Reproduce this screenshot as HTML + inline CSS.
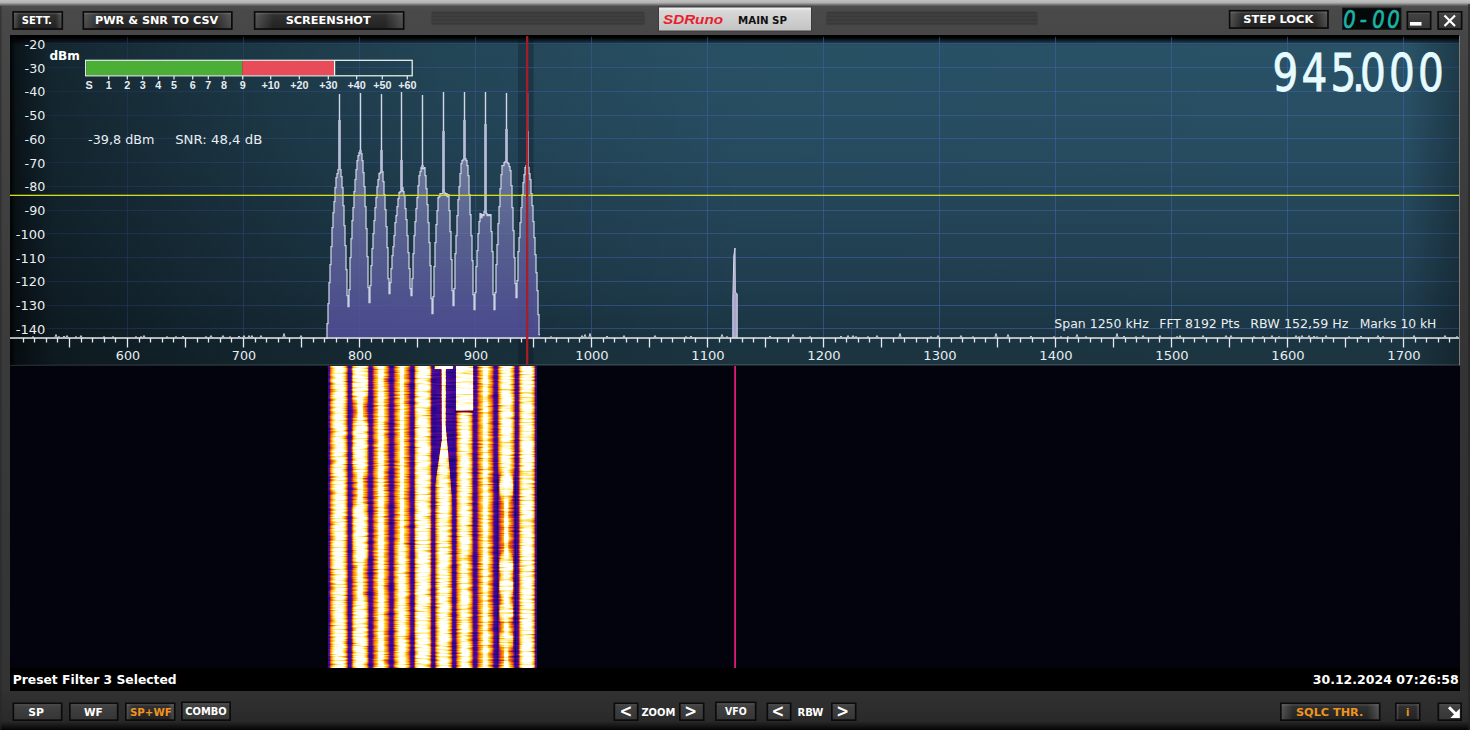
<!DOCTYPE html>
<html lang="en"><head><meta charset="utf-8"><title>SDRuno MAIN SP</title>
<style>
html,body{margin:0;padding:0;background:#484848;overflow:hidden}
body{width:1470px;height:730px}
svg{display:block}
text{font-family:"DejaVu Sans Condensed","DejaVu Sans","Liberation Sans",sans-serif;white-space:pre}
.b{font-weight:bold;fill:#fff;font-size:10.8px}
.o{fill:#f0941e}
.w{font-family:"DejaVu Sans","Liberation Sans",sans-serif;fill:#e8eef2;font-size:12px}
.ar{font-family:"Liberation Sans","DejaVu Sans",sans-serif;font-weight:bold;fill:#e6ecf0;font-size:10.8px}
</style></head><body>
<svg width="1470" height="730" viewBox="0 0 1470 730">
<defs>
<linearGradient id="gTop" x1="0" y1="0" x2="0" y2="1">
<stop offset="0" stop-color="#c2c2c2"/><stop offset="0.075" stop-color="#b2b2b2"/><stop offset="0.17" stop-color="#4e4e4e"/><stop offset="0.3" stop-color="#494949"/><stop offset="1" stop-color="#474747"/>
</linearGradient>
<linearGradient id="gBot" x1="0" y1="0" x2="0" y2="1">
<stop offset="0" stop-color="#313131"/><stop offset="0.5" stop-color="#2d2d2d"/><stop offset="0.78" stop-color="#292929"/><stop offset="0.9" stop-color="#151515"/><stop offset="1" stop-color="#040404"/>
</linearGradient>
<linearGradient id="gSideL" x1="0" y1="0" x2="0" y2="1"><stop offset="0" stop-color="#474747"/><stop offset="0.25" stop-color="#404040"/><stop offset="0.5" stop-color="#3a3a3a"/><stop offset="1" stop-color="#333"/></linearGradient>
<linearGradient id="gSideR" x1="0" y1="0" x2="0" y2="1"><stop offset="0" stop-color="#464646"/><stop offset="0.25" stop-color="#3c3c3c"/><stop offset="0.5" stop-color="#343434"/><stop offset="1" stop-color="#2e2e2e"/></linearGradient>
<linearGradient id="gBtn" x1="0" y1="0" x2="0" y2="1">
<stop offset="0" stop-color="#505050"/><stop offset="0.14" stop-color="#2c2c2c"/><stop offset="1" stop-color="#1e1e1e"/>
</linearGradient>
<linearGradient id="gGloss" x1="0" y1="0" x2="1" y2="0"><stop offset="0" stop-color="#fff" stop-opacity="0.2"/><stop offset="0.12" stop-color="#fff" stop-opacity="0.02"/><stop offset="0.88" stop-color="#fff" stop-opacity="0.02"/><stop offset="1" stop-color="#fff" stop-opacity="0.2"/></linearGradient>
<linearGradient id="gBtn2" x1="0" y1="0" x2="0" y2="1">
<stop offset="0" stop-color="#5a5a5a"/><stop offset="0.12" stop-color="#414141"/><stop offset="1" stop-color="#363636"/>
</linearGradient>
<linearGradient id="gBadge" x1="0" y1="0" x2="0" y2="1">
<stop offset="0" stop-color="#f4f4f4"/><stop offset="0.15" stop-color="#d8d8d8"/><stop offset="1" stop-color="#c4c4c4"/>
</linearGradient>
<linearGradient id="gSpV" x1="0" y1="0" x2="0" y2="1">
<stop offset="0" stop-color="#000"/><stop offset="0.008" stop-color="#000"/><stop offset="0.03" stop-color="#295266"/><stop offset="0.35" stop-color="#274c60"/><stop offset="0.75" stop-color="#203e4f"/><stop offset="0.92" stop-color="#1b3543"/><stop offset="1" stop-color="#1c3540"/>
</linearGradient>
<linearGradient id="gSpH" x1="0" y1="0" x2="1" y2="0">
<stop offset="0" stop-color="#000" stop-opacity="0.95"/><stop offset="0.004" stop-color="#000" stop-opacity="0.75"/><stop offset="0.03" stop-color="#000" stop-opacity="0.52"/><stop offset="0.12" stop-color="#000" stop-opacity="0.38"/><stop offset="0.3" stop-color="#000" stop-opacity="0.15"/><stop offset="0.5" stop-color="#000" stop-opacity="0.02"/><stop offset="0.965" stop-color="#000" stop-opacity="0"/><stop offset="1" stop-color="#000" stop-opacity="0.28"/>
</linearGradient>
<linearGradient id="gFill" x1="0" y1="0" x2="0" y2="1">
<stop offset="0" stop-color="#8a90b6" stop-opacity="0.72"/><stop offset="0.45" stop-color="#686ca4" stop-opacity="0.76"/><stop offset="1" stop-color="#524e9c" stop-opacity="0.84"/>
</linearGradient>

<linearGradient id="gWf" gradientUnits="userSpaceOnUse" x1="327.5" y1="0" x2="537.5" y2="0">
<stop offset="0.0000" stop-color="#000000"/>
<stop offset="0.0038" stop-color="#333333"/>
<stop offset="0.0095" stop-color="#404040"/>
<stop offset="0.0152" stop-color="#7a7a7a"/>
<stop offset="0.0219" stop-color="#a3a3a3"/>
<stop offset="0.0332" stop-color="#cccccc"/>
<stop offset="0.0409" stop-color="#f5f5f5"/>
<stop offset="0.0485" stop-color="#ffffff"/>
<stop offset="0.0637" stop-color="#ffffff"/>
<stop offset="0.0713" stop-color="#f5f5f5"/>
<stop offset="0.0790" stop-color="#cccccc"/>
<stop offset="0.0868" stop-color="#a8a8a8"/>
<stop offset="0.0930" stop-color="#787878"/>
<stop offset="0.0996" stop-color="#383838"/>
<stop offset="0.1120" stop-color="#383838"/>
<stop offset="0.1187" stop-color="#787878"/>
<stop offset="0.1249" stop-color="#a8a8a8"/>
<stop offset="0.1327" stop-color="#cccccc"/>
<stop offset="0.1403" stop-color="#f5f5f5"/>
<stop offset="0.1479" stop-color="#ffffff"/>
<stop offset="0.1631" stop-color="#ffffff"/>
<stop offset="0.1708" stop-color="#f5f5f5"/>
<stop offset="0.1784" stop-color="#cccccc"/>
<stop offset="0.1862" stop-color="#a8a8a8"/>
<stop offset="0.1924" stop-color="#787878"/>
<stop offset="0.1990" stop-color="#383838"/>
<stop offset="0.2114" stop-color="#383838"/>
<stop offset="0.2181" stop-color="#787878"/>
<stop offset="0.2243" stop-color="#a8a8a8"/>
<stop offset="0.2321" stop-color="#cccccc"/>
<stop offset="0.2397" stop-color="#f5f5f5"/>
<stop offset="0.2473" stop-color="#ffffff"/>
<stop offset="0.2626" stop-color="#ffffff"/>
<stop offset="0.2702" stop-color="#f5f5f5"/>
<stop offset="0.2778" stop-color="#cccccc"/>
<stop offset="0.2856" stop-color="#a8a8a8"/>
<stop offset="0.2918" stop-color="#787878"/>
<stop offset="0.2985" stop-color="#383838"/>
<stop offset="0.3109" stop-color="#383838"/>
<stop offset="0.3175" stop-color="#787878"/>
<stop offset="0.3237" stop-color="#a8a8a8"/>
<stop offset="0.3315" stop-color="#cccccc"/>
<stop offset="0.3391" stop-color="#f5f5f5"/>
<stop offset="0.3468" stop-color="#ffffff"/>
<stop offset="0.3620" stop-color="#ffffff"/>
<stop offset="0.3696" stop-color="#f5f5f5"/>
<stop offset="0.3772" stop-color="#cccccc"/>
<stop offset="0.3850" stop-color="#a8a8a8"/>
<stop offset="0.3912" stop-color="#787878"/>
<stop offset="0.3979" stop-color="#383838"/>
<stop offset="0.4103" stop-color="#383838"/>
<stop offset="0.4170" stop-color="#787878"/>
<stop offset="0.4231" stop-color="#a8a8a8"/>
<stop offset="0.4310" stop-color="#cccccc"/>
<stop offset="0.4386" stop-color="#f5f5f5"/>
<stop offset="0.4462" stop-color="#ffffff"/>
<stop offset="0.4614" stop-color="#ffffff"/>
<stop offset="0.4690" stop-color="#f5f5f5"/>
<stop offset="0.4767" stop-color="#cccccc"/>
<stop offset="0.4845" stop-color="#a8a8a8"/>
<stop offset="0.4907" stop-color="#787878"/>
<stop offset="0.4973" stop-color="#383838"/>
<stop offset="0.5097" stop-color="#383838"/>
<stop offset="0.5164" stop-color="#787878"/>
<stop offset="0.5226" stop-color="#a8a8a8"/>
<stop offset="0.5304" stop-color="#cccccc"/>
<stop offset="0.5380" stop-color="#f5f5f5"/>
<stop offset="0.5456" stop-color="#ffffff"/>
<stop offset="0.5609" stop-color="#ffffff"/>
<stop offset="0.5685" stop-color="#f5f5f5"/>
<stop offset="0.5761" stop-color="#cccccc"/>
<stop offset="0.5839" stop-color="#a8a8a8"/>
<stop offset="0.5901" stop-color="#787878"/>
<stop offset="0.5968" stop-color="#383838"/>
<stop offset="0.6091" stop-color="#383838"/>
<stop offset="0.6158" stop-color="#787878"/>
<stop offset="0.6220" stop-color="#a8a8a8"/>
<stop offset="0.6298" stop-color="#cccccc"/>
<stop offset="0.6374" stop-color="#f5f5f5"/>
<stop offset="0.6450" stop-color="#ffffff"/>
<stop offset="0.6603" stop-color="#ffffff"/>
<stop offset="0.6679" stop-color="#f5f5f5"/>
<stop offset="0.6755" stop-color="#cccccc"/>
<stop offset="0.6833" stop-color="#a8a8a8"/>
<stop offset="0.6895" stop-color="#787878"/>
<stop offset="0.6962" stop-color="#383838"/>
<stop offset="0.7086" stop-color="#383838"/>
<stop offset="0.7152" stop-color="#787878"/>
<stop offset="0.7214" stop-color="#a8a8a8"/>
<stop offset="0.7292" stop-color="#cccccc"/>
<stop offset="0.7369" stop-color="#f5f5f5"/>
<stop offset="0.7445" stop-color="#ffffff"/>
<stop offset="0.7597" stop-color="#ffffff"/>
<stop offset="0.7673" stop-color="#f5f5f5"/>
<stop offset="0.7750" stop-color="#cccccc"/>
<stop offset="0.7828" stop-color="#a8a8a8"/>
<stop offset="0.7890" stop-color="#787878"/>
<stop offset="0.7956" stop-color="#383838"/>
<stop offset="0.8080" stop-color="#383838"/>
<stop offset="0.8147" stop-color="#787878"/>
<stop offset="0.8209" stop-color="#a8a8a8"/>
<stop offset="0.8287" stop-color="#cccccc"/>
<stop offset="0.8363" stop-color="#f5f5f5"/>
<stop offset="0.8439" stop-color="#ffffff"/>
<stop offset="0.8591" stop-color="#ffffff"/>
<stop offset="0.8668" stop-color="#f5f5f5"/>
<stop offset="0.8744" stop-color="#cccccc"/>
<stop offset="0.8822" stop-color="#a8a8a8"/>
<stop offset="0.8884" stop-color="#787878"/>
<stop offset="0.8950" stop-color="#383838"/>
<stop offset="0.9074" stop-color="#383838"/>
<stop offset="0.9141" stop-color="#787878"/>
<stop offset="0.9203" stop-color="#a8a8a8"/>
<stop offset="0.9281" stop-color="#cccccc"/>
<stop offset="0.9357" stop-color="#f5f5f5"/>
<stop offset="0.9433" stop-color="#ffffff"/>
<stop offset="0.9586" stop-color="#ffffff"/>
<stop offset="0.9662" stop-color="#f5f5f5"/>
<stop offset="0.9738" stop-color="#cccccc"/>
<stop offset="0.9781" stop-color="#a3a3a3"/>
<stop offset="0.9848" stop-color="#7a7a7a"/>
<stop offset="0.9905" stop-color="#404040"/>
<stop offset="0.9962" stop-color="#333333"/>
<stop offset="1.0000" stop-color="#000000"/>
</linearGradient>
<filter id="fBl" filterUnits="userSpaceOnUse" x="327.5" y="366" width="210.0" height="302"><feGaussianBlur stdDeviation="0.7 3"/></filter>
<filter id="fWf" filterUnits="userSpaceOnUse" x="327.5" y="366" width="210.0" height="302" color-interpolation-filters="sRGB">
<feTurbulence type="fractalNoise" baseFrequency="0.05 0.55" numOctaves="2" seed="5" result="n"/>
<feColorMatrix in="n" type="matrix" values="1 0 0 0 0  1 0 0 0 0  1 0 0 0 0  0 0 0 0 1" result="ng"/>
<feComposite in="SourceGraphic" in2="ng" operator="arithmetic" k1="1.0" k2="0.52" k3="0" k4="0" result="m"/>
<feComponentTransfer in="m"><feFuncR type="table" tableValues="0.00 0.05 0.18 0.42 0.82 0.93 1.00 1.00 1.00 1.00 1.00"/><feFuncG type="table" tableValues="0.00 0.00 0.03 0.06 0.22 0.42 0.62 0.80 0.92 0.98 1.00"/><feFuncB type="table" tableValues="0.03 0.25 0.58 0.58 0.14 0.04 0.08 0.16 0.45 0.82 1.00"/></feComponentTransfer>
</filter>
</defs>
<rect x="0" y="0" width="1470" height="730" fill="#484848"/>
<rect x="0" y="0" width="1470" height="36" fill="url(#gTop)"/>
<rect x="0" y="690" width="1470" height="40" fill="url(#gBot)"/>
<rect x="0" y="30" width="10" height="661" fill="url(#gSideL)"/>
<rect x="0" y="6" width="1.6" height="730" fill="#262626" opacity="0.55"/>
<rect x="1460" y="30" width="10" height="661" fill="url(#gSideR)"/>
<rect x="1468" y="4" width="2" height="730" fill="#222" opacity="0.6"/>
<rect x="431" y="11.3" width="214" height="14" rx="3" fill="#000" opacity="0.1"/>
<rect x="432" y="12.1" width="212" height="1.8" rx="0.9" fill="#3a3a3a"/>
<rect x="432" y="15.6" width="212" height="1.8" rx="0.9" fill="#3a3a3a"/>
<rect x="432" y="19.1" width="212" height="1.8" rx="0.9" fill="#3a3a3a"/>
<rect x="432" y="22.6" width="212" height="1.8" rx="0.9" fill="#3a3a3a"/>
<rect x="826" y="11.3" width="212" height="14" rx="3" fill="#000" opacity="0.1"/>
<rect x="827" y="12.1" width="210" height="1.8" rx="0.9" fill="#3a3a3a"/>
<rect x="827" y="15.6" width="210" height="1.8" rx="0.9" fill="#3a3a3a"/>
<rect x="827" y="19.1" width="210" height="1.8" rx="0.9" fill="#3a3a3a"/>
<rect x="827" y="22.6" width="210" height="1.8" rx="0.9" fill="#3a3a3a"/>
<rect x="12.3" y="11.1" width="50.8" height="18.799999999999997" fill="#0b0b0b"/>
<rect x="14.0" y="12.799999999999999" width="47.4" height="15.399999999999997" fill="url(#gBtn)"/>
<rect x="14.0" y="12.799999999999999" width="47.4" height="15.399999999999997" fill="url(#gGloss)"/>
<text class="b" x="21.8" y="23.8" textLength="30.0" lengthAdjust="spacingAndGlyphs">SETT.</text>
<rect x="82.5" y="11.1" width="150.2" height="18.799999999999997" fill="#0b0b0b"/>
<rect x="84.2" y="12.799999999999999" width="146.79999999999998" height="15.399999999999997" fill="url(#gBtn)"/>
<rect x="84.2" y="12.799999999999999" width="146.79999999999998" height="15.399999999999997" fill="url(#gGloss)"/>
<text class="b" x="95" y="23.8" textLength="123.3" lengthAdjust="spacingAndGlyphs">PWR &amp; SNR TO CSV</text>
<rect x="253.8" y="11.1" width="150.7" height="18.799999999999997" fill="#0b0b0b"/>
<rect x="255.5" y="12.799999999999999" width="147.29999999999998" height="15.399999999999997" fill="url(#gBtn)"/>
<rect x="255.5" y="12.799999999999999" width="147.29999999999998" height="15.399999999999997" fill="url(#gGloss)"/>
<text class="b" x="285.7" y="23.8" textLength="85.0" lengthAdjust="spacingAndGlyphs">SCREENSHOT</text>
<rect x="1228.8" y="9.9" width="100.0" height="19.0" fill="#0b0b0b"/>
<rect x="1230.5" y="11.6" width="96.6" height="15.6" fill="url(#gBtn)"/>
<rect x="1230.5" y="11.6" width="96.6" height="15.6" fill="url(#gGloss)"/>
<text class="b" x="1243.3" y="23.4" textLength="70.0" lengthAdjust="spacingAndGlyphs">STEP LOCK</text>
<rect x="658" y="6.5" width="154" height="25" fill="#3c3c3c"/>
<rect x="659" y="7.5" width="152" height="23" fill="url(#gBadge)"/>
<text x="663" y="24" style='font-family:"Liberation Sans","DejaVu Sans",sans-serif' font-weight="bold" font-style="italic" font-size="12.5px" fill="#e8202c" textLength="60" lengthAdjust="spacingAndGlyphs">SDRuno</text>
<text x="738" y="23.7" font-weight="bold" font-size="10.4px" fill="#111" textLength="49" lengthAdjust="spacingAndGlyphs">MAIN SP</text>
<rect x="1342.5" y="8" width="58.5" height="21.5" fill="#050808" stroke="#1a1a1a" stroke-width="1"/>
<g transform="scale(0.8 1)"><text y="28.4" style='font-family:"DejaVu Sans","Liberation Sans",sans-serif;font-size:24.5px;font-style:italic' fill="#19b4a6" stroke="#19b4a6" stroke-width="0.7" x="1679.0 1699.7 1715.4 1734.0">0-00</text></g>
<rect x="1406.5" y="11.0" width="25" height="18.9" fill="#0b0b0b"/>
<rect x="1408.2" y="12.7" width="21.6" height="15.499999999999998" fill="url(#gBtn2)"/>
<rect x="1410" y="22" width="11.5" height="3.6" fill="#fff"/>
<rect x="1437.3" y="11.0" width="25.200000000000045" height="18.9" fill="#0b0b0b"/>
<rect x="1439.0" y="12.7" width="21.800000000000047" height="15.499999999999998" fill="url(#gBtn2)"/>
<path d="M1444.5 15.5 L1455 26 M1455 15.5 L1444.5 26" stroke="#fff" stroke-width="2.2" fill="none"/>
<rect x="10" y="35" width="1449" height="330" fill="url(#gSpV)"/>
<rect x="10" y="364" width="1449" height="1.4" fill="#3a5560" opacity="0.8"/>
<rect x="1459" y="36" width="1" height="330" fill="#7a7a7a"/>
<rect x="518" y="37" width="15.5" height="327" fill="#0a1020" opacity="0.3"/>
<path d="M46 43.5H1459M46 67.5H1459M46 91.5H1459M46 115.5H1459M46 138.5H1459M46 162.5H1459M46 186.5H1459M46 210.5H1459M46 233.5H1459M46 257.5H1459M46 281.5H1459M46 305.5H1459M46 328.5H1459M127.5 37V338M243.5 37V338M359.5 37V338M475.5 37V338M591.5 37V338M707.5 37V338M823.5 37V338M939.5 37V338M1055.5 37V338M1171.5 37V338M1287.5 37V338M1403.5 37V338" stroke="#3e60a2" stroke-width="1" fill="none" opacity="0.64"/>
<rect x="10" y="35" width="1449" height="330" fill="url(#gSpH)"/>
<text class="w" x="24.6" y="48.8" textLength="20.7" lengthAdjust="spacingAndGlyphs">-20</text>
<text class="w" x="24.6" y="72.5" textLength="20.7" lengthAdjust="spacingAndGlyphs">-30</text>
<text class="w" x="24.6" y="96.3" textLength="20.7" lengthAdjust="spacingAndGlyphs">-40</text>
<text class="w" x="24.6" y="120.0" textLength="20.7" lengthAdjust="spacingAndGlyphs">-50</text>
<text class="w" x="24.6" y="143.8" textLength="20.7" lengthAdjust="spacingAndGlyphs">-60</text>
<text class="w" x="24.6" y="167.5" textLength="20.7" lengthAdjust="spacingAndGlyphs">-70</text>
<text class="w" x="24.6" y="191.2" textLength="20.7" lengthAdjust="spacingAndGlyphs">-80</text>
<text class="w" x="24.6" y="215.0" textLength="20.7" lengthAdjust="spacingAndGlyphs">-90</text>
<text class="w" x="15.8" y="238.7" textLength="29.5" lengthAdjust="spacingAndGlyphs">-100</text>
<text class="w" x="15.8" y="262.5" textLength="29.5" lengthAdjust="spacingAndGlyphs">-110</text>
<text class="w" x="15.8" y="286.2" textLength="29.5" lengthAdjust="spacingAndGlyphs">-120</text>
<text class="w" x="15.8" y="309.9" textLength="29.5" lengthAdjust="spacingAndGlyphs">-130</text>
<text class="w" x="15.8" y="333.7" textLength="29.5" lengthAdjust="spacingAndGlyphs">-140</text>
<text x="49.4" y="59.8" font-weight="bold" font-size="11.5px" fill="#fff" textLength="30.4" lengthAdjust="spacingAndGlyphs">dBm</text>
<rect x="85.7" y="60.3" width="326.5" height="15.5" fill="none" stroke="#f4fbf4" stroke-width="1.2"/>
<rect x="86.3" y="60.9" width="156" height="14.3" fill="#4bae37"/>
<rect x="242.3" y="60.9" width="92" height="14.3" fill="#e84c58"/>
<rect x="334" y="60.5" width="1.2" height="15" fill="#f4fbf4"/>
<text class="ar" x="89" y="89.4" text-anchor="middle">S</text>
<text class="ar" x="108.7" y="89.4" text-anchor="middle">1</text>
<text class="ar" x="127.3" y="89.4" text-anchor="middle">2</text>
<text class="ar" x="142.7" y="89.4" text-anchor="middle">3</text>
<text class="ar" x="158.3" y="89.4" text-anchor="middle">4</text>
<text class="ar" x="174" y="89.4" text-anchor="middle">5</text>
<text class="ar" x="192.7" y="89.4" text-anchor="middle">6</text>
<text class="ar" x="208.3" y="89.4" text-anchor="middle">7</text>
<text class="ar" x="224" y="89.4" text-anchor="middle">8</text>
<text class="ar" x="242.7" y="89.4" text-anchor="middle">9</text>
<text class="ar" x="270.7" y="89.4" text-anchor="middle">+10</text>
<text class="ar" x="299.3" y="89.4" text-anchor="middle">+20</text>
<text class="ar" x="328.3" y="89.4" text-anchor="middle">+30</text>
<text class="ar" x="356.7" y="89.4" text-anchor="middle">+40</text>
<text class="ar" x="382.3" y="89.4" text-anchor="middle">+50</text>
<text class="ar" x="407.3" y="89.4" text-anchor="middle">+60</text>
<path d="M108.7 76V79.5M127.3 76V79.5M142.7 76V79.5M158.3 76V79.5M174 76V79.5M192.7 76V79.5M208.3 76V79.5M224 76V79.5M242.7 76V79.5M270.7 76V79.5M299.3 76V79.5M328.3 76V79.5M356.7 76V79.5M382.3 76V79.5M407.3 76V79.5" stroke="#e8eef0" stroke-width="1.2" fill="none"/>
<text class="w" x="88.1" y="143.9" textLength="66.3" lengthAdjust="spacingAndGlyphs" style="font-size:11.8px">-39,8 dBm</text>
<text class="w" x="175.2" y="143.9" textLength="87.1" lengthAdjust="spacingAndGlyphs" style="font-size:11.8px">SNR: 48,4 dB</text>
<text class="w" x="1054.3" y="327.5" textLength="94.4" lengthAdjust="spacingAndGlyphs" style="font-size:11.8px">Span 1250 kHz</text>
<text class="w" x="1159.2" y="327.5" textLength="80.6" lengthAdjust="spacingAndGlyphs" style="font-size:11.8px">FFT 8192 Pts</text>
<text class="w" x="1250.3" y="327.5" textLength="98.2" lengthAdjust="spacingAndGlyphs" style="font-size:11.8px">RBW 152,59 Hz</text>
<text class="w" x="1359.7" y="327.5" textLength="76.7" lengthAdjust="spacingAndGlyphs" style="font-size:11.8px">Marks 10 kH</text>
<path d="M326 338 L326 338.0H327V323.5H328V303.5H329V282.5H330V264.5H331V246.5H332V227.5H333V212.5H334V201.5H335V187.5H336V177.5H337V173.5H338V169.5H339V169.5H340V169.5H341V176.5H342V187.5H343V205.5H344V225.5H345V245.5H346V269.5H347V295.5H348V306.5H349V289.5H350V257.5H351V238.5H352V220.5H353V207.5H354V191.5H355V179.5H356V169.5H357V160.5H358V155.5H359V152.5H360V153.5H361V153.5H362V160.5H363V172.5H364V186.5H365V206.5H366V228.5H367V256.5H368V287.5H369V302.5H370V285.5H371V265.5H372V248.5H373V233.5H374V220.5H375V207.5H376V197.5H377V186.5H378V179.5H379V173.5H380V172.5H381V171.5H382V171.5H383V181.5H384V194.5H385V209.5H386V226.5H387V247.5H388V278.5H389V293.5H390V282.5H391V268.5H392V255.5H393V246.5H394V235.5H395V222.5H396V215.5H397V206.5H398V198.5H399V192.5H400V191.5H401V190.5H402V187.5H403V191.5H404V195.5H405V208.5H406V219.5H407V235.5H408V252.5H409V268.5H410V288.5H411V295.5H412V278.5H413V253.5H414V235.5H415V221.5H416V208.5H417V197.5H418V185.5H419V175.5H420V171.5H421V167.5H422V168.5H423V168.5H424V167.5H425V175.5H426V188.5H427V204.5H428V222.5H429V242.5H430V265.5H431V298.5H432V313.5H433V296.5H434V266.5H435V242.5H436V224.5H437V210.5H438V197.5H439V196.5H440V193.5H441V193.5H442V193.5H443V189.5H444V192.5H445V194.5H446V193.5H447V196.5H448V194.5H449V210.5H450V231.5H451V259.5H452V290.5H453V305.5H454V288.5H455V253.5H456V235.5H457V215.5H458V199.5H459V186.5H460V173.5H461V163.5H462V160.5H463V159.5H464V158.5H465V158.5H466V160.5H467V165.5H468V175.5H469V194.5H470V214.5H471V235.5H472V260.5H473V294.5H474V309.5H475V292.5H476V266.5H477V250.5H478V233.5H479V221.5H480V213.5H481V217.5H482V214.5H483V215.5H484V211.5H485V210.5H486V213.5H487V215.5H488V214.5H489V215.5H490V214.5H491V231.5H492V251.5H493V294.5H494V309.5H495V292.5H496V264.5H497V244.5H498V223.5H499V206.5H500V188.5H501V174.5H502V165.5H503V165.5H504V162.5H505V161.5H506V161.5H507V162.5H508V163.5H509V166.5H510V170.5H511V185.5H512V207.5H513V230.5H514V257.5H515V283.5H516V297.5H517V280.5H518V251.5H519V237.5H520V222.5H521V207.5H522V194.5H523V182.5H524V174.5H525V167.5H526V165.5H527V167.5H528V167.5H529V173.5H530V179.5H531V193.5H532V205.5H533V221.5H534V237.5H535V254.5H536V272.5H537V290.5H538V314.5H539V334.5H540 V338 Z" fill="url(#gFill)" stroke="none"/>
<path d="M326 338.0H327V323.5H328V303.5H329V282.5H330V264.5H331V246.5H332V227.5H333V212.5H334V201.5H335V187.5H336V177.5H337V173.5H338V169.5H339V169.5H340V169.5H341V176.5H342V187.5H343V205.5H344V225.5H345V245.5H346V269.5H347V295.5H348V306.5H349V289.5H350V257.5H351V238.5H352V220.5H353V207.5H354V191.5H355V179.5H356V169.5H357V160.5H358V155.5H359V152.5H360V153.5H361V153.5H362V160.5H363V172.5H364V186.5H365V206.5H366V228.5H367V256.5H368V287.5H369V302.5H370V285.5H371V265.5H372V248.5H373V233.5H374V220.5H375V207.5H376V197.5H377V186.5H378V179.5H379V173.5H380V172.5H381V171.5H382V171.5H383V181.5H384V194.5H385V209.5H386V226.5H387V247.5H388V278.5H389V293.5H390V282.5H391V268.5H392V255.5H393V246.5H394V235.5H395V222.5H396V215.5H397V206.5H398V198.5H399V192.5H400V191.5H401V190.5H402V187.5H403V191.5H404V195.5H405V208.5H406V219.5H407V235.5H408V252.5H409V268.5H410V288.5H411V295.5H412V278.5H413V253.5H414V235.5H415V221.5H416V208.5H417V197.5H418V185.5H419V175.5H420V171.5H421V167.5H422V168.5H423V168.5H424V167.5H425V175.5H426V188.5H427V204.5H428V222.5H429V242.5H430V265.5H431V298.5H432V313.5H433V296.5H434V266.5H435V242.5H436V224.5H437V210.5H438V197.5H439V196.5H440V193.5H441V193.5H442V193.5H443V189.5H444V192.5H445V194.5H446V193.5H447V196.5H448V194.5H449V210.5H450V231.5H451V259.5H452V290.5H453V305.5H454V288.5H455V253.5H456V235.5H457V215.5H458V199.5H459V186.5H460V173.5H461V163.5H462V160.5H463V159.5H464V158.5H465V158.5H466V160.5H467V165.5H468V175.5H469V194.5H470V214.5H471V235.5H472V260.5H473V294.5H474V309.5H475V292.5H476V266.5H477V250.5H478V233.5H479V221.5H480V213.5H481V217.5H482V214.5H483V215.5H484V211.5H485V210.5H486V213.5H487V215.5H488V214.5H489V215.5H490V214.5H491V231.5H492V251.5H493V294.5H494V309.5H495V292.5H496V264.5H497V244.5H498V223.5H499V206.5H500V188.5H501V174.5H502V165.5H503V165.5H504V162.5H505V161.5H506V161.5H507V162.5H508V163.5H509V166.5H510V170.5H511V185.5H512V207.5H513V230.5H514V257.5H515V283.5H516V297.5H517V280.5H518V251.5H519V237.5H520V222.5H521V207.5H522V194.5H523V182.5H524V174.5H525V167.5H526V165.5H527V167.5H528V167.5H529V173.5H530V179.5H531V193.5H532V205.5H533V221.5H534V237.5H535V254.5H536V272.5H537V290.5H538V314.5H539V334.5H540" fill="none" stroke="#cdd2e2" stroke-width="1.25" stroke-linejoin="miter"/>
<path d="M339.5 120V170M360.5 150V154M381.5 150V172M401.5 160V190M422.5 165V168M443.5 131V193M464.5 120V160M485.5 124V213M506.5 129V163M527.5 131V168" fill="none" stroke="#b9bdd8" stroke-width="2.7"/>
<path d="M339.5 94V120M360.5 93V150M381.5 94V150M401.5 92V160M422.5 95V165M443.5 92V131M464.5 92V120M485.5 92V124M506.5 93V129M527.5 93V131" fill="none" stroke="#d3d7e6" stroke-width="1.4"/>
<path d="M732.8 338 L732.8 300 L733.8 256 L735 248 L735.3 292 L737.2 294 L737.2 338 Z" fill="#a8a6cc"/><path d="M732.8 338 L732.8 300 L733.8 256 L735 248 L735.3 292 L737.2 294 L737.2 338" fill="none" stroke="#d8d8e8" stroke-width="1"/>
<rect x="10" y="337.25" width="1449" height="1.55" fill="#dfe3e8"/>
<path d="M23.5 338v4.6M34.5 338v4.6M46.5 338v4.6M57.5 338v4.6M69.5 338v9.5M81.5 338v4.6M92.5 338v4.6M104.5 338v4.6M115.5 338v4.6M127.5 338v9.5M139.5 338v4.6M150.5 338v4.6M162.5 338v4.6M173.5 338v4.6M185.5 338v9.5M197.5 338v4.6M208.5 338v4.6M220.5 338v4.6M231.5 338v4.6M243.5 338v9.5M255.5 338v4.6M266.5 338v4.6M278.5 338v4.6M289.5 338v4.6M301.5 338v9.5M313.5 338v4.6M324.5 338v4.6M336.5 338v4.6M347.5 338v4.6M359.5 338v9.5M371.5 338v4.6M382.5 338v4.6M394.5 338v4.6M405.5 338v4.6M417.5 338v9.5M429.5 338v4.6M440.5 338v4.6M452.5 338v4.6M463.5 338v4.6M475.5 338v9.5M487.5 338v4.6M498.5 338v4.6M510.5 338v4.6M521.5 338v4.6M533.5 338v9.5M545.5 338v4.6M556.5 338v4.6M568.5 338v4.6M579.5 338v4.6M591.5 338v9.5M603.5 338v4.6M614.5 338v4.6M626.5 338v4.6M637.5 338v4.6M649.5 338v9.5M661.5 338v4.6M672.5 338v4.6M684.5 338v4.6M695.5 338v4.6M707.5 338v9.5M719.5 338v4.6M730.5 338v4.6M742.5 338v4.6M753.5 338v4.6M765.5 338v9.5M777.5 338v4.6M788.5 338v4.6M800.5 338v4.6M811.5 338v4.6M823.5 338v9.5M835.5 338v4.6M846.5 338v4.6M858.5 338v4.6M869.5 338v4.6M881.5 338v9.5M893.5 338v4.6M904.5 338v4.6M916.5 338v4.6M927.5 338v4.6M939.5 338v9.5M951.5 338v4.6M962.5 338v4.6M974.5 338v4.6M985.5 338v4.6M997.5 338v9.5M1009.5 338v4.6M1020.5 338v4.6M1032.5 338v4.6M1043.5 338v4.6M1055.5 338v9.5M1067.5 338v4.6M1078.5 338v4.6M1090.5 338v4.6M1101.5 338v4.6M1113.5 338v9.5M1125.5 338v4.6M1136.5 338v4.6M1148.5 338v4.6M1159.5 338v4.6M1171.5 338v9.5M1183.5 338v4.6M1194.5 338v4.6M1206.5 338v4.6M1217.5 338v4.6M1229.5 338v9.5M1241.5 338v4.6M1252.5 338v4.6M1264.5 338v4.6M1275.5 338v4.6M1287.5 338v9.5M1299.5 338v4.6M1310.5 338v4.6M1322.5 338v4.6M1333.5 338v4.6M1345.5 338v9.5M1357.5 338v4.6M1368.5 338v4.6M1380.5 338v4.6M1391.5 338v4.6M1403.5 338v9.5M1415.5 338v4.6M1426.5 338v4.6M1438.5 338v4.6M1449.5 338v4.6" stroke="#e6eaee" stroke-width="1.3" fill="none"/>
<path d="M31.8 337.5l1.2 -1l1.2 1M54.8 337.5l1.2 -3l1.2 3M57.8 337.5l1.2 -1l1.2 1M62.8 337.5l1.2 -1.5l1.2 1.5M65.8 337.5l1.2 -2l1.2 2M74.8 337.5l1.2 -1l1.2 1M79.8 337.5l1.2 -2l1.2 2M102.8 337.5l1.2 -1l1.2 1M111.8 337.5l1.2 -1l1.2 1M134.8 337.5l1.2 -1l1.2 1M139.8 337.5l1.2 -1l1.2 1M142.8 337.5l1.2 -2l1.2 2M165.8 337.5l1.2 -1l1.2 1M174.8 337.5l1.2 -1l1.2 1M181.8 337.5l1.2 -1.5l1.2 1.5M204.8 337.5l1.2 -1l1.2 1M209.8 337.5l1.2 -2l1.2 2M221.8 337.5l1.2 -2l1.2 2M228.8 337.5l1.2 -1l1.2 1M237.8 337.5l1.2 -1.5l1.2 1.5M242.8 337.5l1.2 -2l1.2 2M247.8 337.5l1.2 -2l1.2 2M250.8 337.5l1.2 -2l1.2 2M259.8 337.5l1.2 -2l1.2 2M282.8 337.5l1.2 -4l1.2 4M299.8 337.5l1.2 -2l1.2 2M549.8 337.5l1.2 -1l1.2 1M580.8 337.5l1.2 -2l1.2 2M583.8 337.5l1.2 -3l1.2 3M588.8 337.5l1.2 -4l1.2 4M605.8 337.5l1.2 -1.5l1.2 1.5M622.8 337.5l1.2 -2l1.2 2M653.8 337.5l1.2 -2l1.2 2M684.8 337.5l1.2 -1l1.2 1M689.8 337.5l1.2 -1.5l1.2 1.5M720.8 337.5l1.2 -3l1.2 3M725.8 337.5l1.2 -1l1.2 1M768.8 337.5l1.2 -1.5l1.2 1.5M791.8 337.5l1.2 -3l1.2 3M808.8 337.5l1.2 -1l1.2 1M839.8 337.5l1.2 -1.5l1.2 1.5M846.8 337.5l1.2 -2l1.2 2M851.8 337.5l1.2 -2l1.2 2M854.8 337.5l1.2 -1l1.2 1M866.8 337.5l1.2 -1l1.2 1M875.8 337.5l1.2 -2l1.2 2M898.8 337.5l1.2 -4l1.2 4M929.8 337.5l1.2 -1l1.2 1M936.8 337.5l1.2 -2l1.2 2M959.8 337.5l1.2 -2l1.2 2M971.8 337.5l1.2 -1l1.2 1M994.8 337.5l1.2 -4l1.2 4M1006.8 337.5l1.2 -3l1.2 3M1029.8 337.5l1.2 -1.5l1.2 1.5M1052.8 337.5l1.2 -1l1.2 1M1059.8 337.5l1.2 -1l1.2 1M1066.8 337.5l1.2 -1l1.2 1M1075.8 337.5l1.2 -3l1.2 3M1084.8 337.5l1.2 -1l1.2 1M1115.8 337.5l1.2 -4l1.2 4M1122.8 337.5l1.2 -1.5l1.2 1.5M1134.8 337.5l1.2 -1l1.2 1M1141.8 337.5l1.2 -2l1.2 2M1158.8 337.5l1.2 -2l1.2 2M1175.8 337.5l1.2 -1l1.2 1M1178.8 337.5l1.2 -2l1.2 2M1201.8 337.5l1.2 -2l1.2 2M1224.8 337.5l1.2 -2l1.2 2M1229.8 337.5l1.2 -2l1.2 2M1252.8 337.5l1.2 -1l1.2 1M1261.8 337.5l1.2 -1l1.2 1M1270.8 337.5l1.2 -2l1.2 2M1277.8 337.5l1.2 -1l1.2 1M1294.8 337.5l1.2 -2l1.2 2M1297.8 337.5l1.2 -1l1.2 1M1300.8 337.5l1.2 -2l1.2 2M1307.8 337.5l1.2 -2l1.2 2M1312.8 337.5l1.2 -1.5l1.2 1.5M1315.8 337.5l1.2 -1l1.2 1M1324.8 337.5l1.2 -2l1.2 2M1347.8 337.5l1.2 -1l1.2 1M1359.8 337.5l1.2 -1.5l1.2 1.5M1376.8 337.5l1.2 -2l1.2 2M1381.8 337.5l1.2 -1l1.2 1M1412.8 337.5l1.2 -2l1.2 2M1443.8 337.5l1.2 -2l1.2 2M1455.8 337.5l1.2 -1l1.2 1" stroke="#dfe3ea" stroke-width="1" fill="none" opacity="0.9"/>
<text class="w" x="115.8" y="360" textLength="24.3" lengthAdjust="spacingAndGlyphs" style="font-size:11.8px">600</text>
<text class="w" x="231.8" y="360" textLength="24.3" lengthAdjust="spacingAndGlyphs" style="font-size:11.8px">700</text>
<text class="w" x="347.9" y="360" textLength="24.3" lengthAdjust="spacingAndGlyphs" style="font-size:11.8px">800</text>
<text class="w" x="463.9" y="360" textLength="24.3" lengthAdjust="spacingAndGlyphs" style="font-size:11.8px">900</text>
<text class="w" x="575.3" y="360" textLength="33.4" lengthAdjust="spacingAndGlyphs" style="font-size:11.8px">1000</text>
<text class="w" x="691.3" y="360" textLength="33.4" lengthAdjust="spacingAndGlyphs" style="font-size:11.8px">1100</text>
<text class="w" x="807.3" y="360" textLength="33.4" lengthAdjust="spacingAndGlyphs" style="font-size:11.8px">1200</text>
<text class="w" x="923.3" y="360" textLength="33.4" lengthAdjust="spacingAndGlyphs" style="font-size:11.8px">1300</text>
<text class="w" x="1039.3" y="360" textLength="33.4" lengthAdjust="spacingAndGlyphs" style="font-size:11.8px">1400</text>
<text class="w" x="1155.3" y="360" textLength="33.4" lengthAdjust="spacingAndGlyphs" style="font-size:11.8px">1500</text>
<text class="w" x="1271.3" y="360" textLength="33.4" lengthAdjust="spacingAndGlyphs" style="font-size:11.8px">1600</text>
<text class="w" x="1387.3" y="360" textLength="33.4" lengthAdjust="spacingAndGlyphs" style="font-size:11.8px">1700</text>
<rect x="10" y="194.7" width="1449" height="1.3" fill="#d4dc1c"/>
<rect x="526" y="36" width="2.3" height="329" fill="#aa1c25" opacity="0.95"/>
<g transform="scale(0.78 1)"><text y="91.4" style='font-family:"DejaVu Sans","Liberation Sans",sans-serif;font-size:52px' fill="#e6fbff" stroke="#e6fbff" stroke-width="0.9" x="1631.4 1668.6 1705.8 1733.3 1743.6 1780.8 1817.9">945.000</text></g>
<rect x="10" y="365.5" width="1450" height="325" fill="#03030d"/>
<g filter="url(#fWf)">
<rect x="327.5" y="366" width="210.0" height="302" fill="url(#gWf)"/>
<g filter="url(#fBl)">
<rect x="352.7" y="366" width="15.0" height="30" fill="#fff" opacity="0.5"/>
<rect x="351.6" y="396" width="6.0" height="26" fill="#000" opacity="0.3"/>
<rect x="362.8" y="396" width="6.0" height="26" fill="#000" opacity="0.3"/>
<rect x="353.2" y="424" width="14.0" height="44" fill="#fff" opacity="0.3"/>
<rect x="351.6" y="470" width="6.0" height="36" fill="#000" opacity="0.28"/>
<rect x="362.8" y="470" width="6.0" height="36" fill="#000" opacity="0.28"/>
<rect x="353.2" y="508" width="14.0" height="50" fill="#fff" opacity="0.25"/>
<rect x="351.6" y="560" width="6.0" height="42" fill="#000" opacity="0.22"/>
<rect x="362.8" y="560" width="6.0" height="42" fill="#000" opacity="0.22"/>
<rect x="353.2" y="604" width="14.0" height="64" fill="#fff" opacity="0.2"/>
<rect x="372.4" y="366" width="6.0" height="302" fill="#000" opacity="0.24"/>
<rect x="383.6" y="366" width="6.0" height="302" fill="#000" opacity="0.24"/>
<rect x="393.3" y="366" width="6.6" height="179" fill="#000" opacity="0.27"/>
<rect x="403.9" y="366" width="6.6" height="179" fill="#000" opacity="0.27"/>
<rect x="393.3" y="545" width="6.0" height="123" fill="#000" opacity="0.12"/>
<rect x="404.5" y="545" width="6.0" height="123" fill="#000" opacity="0.12"/>
<rect x="415.3" y="366" width="15.0" height="302" fill="#fff" opacity="0.3"/>
<rect x="333.3" y="366" width="12.0" height="302" fill="#fff" opacity="0.12"/>
<rect x="456.0" y="414" width="6.0" height="254" fill="#000" opacity="0.1"/>
<rect x="467.2" y="414" width="6.0" height="254" fill="#000" opacity="0.1"/>
<rect x="457.6" y="413" width="14.0" height="127" fill="#fff" opacity="0.2"/>
<rect x="476.8" y="366" width="6.4" height="302" fill="#000" opacity="0.24"/>
<rect x="487.6" y="366" width="6.4" height="302" fill="#000" opacity="0.24"/>
<rect x="496.8" y="472" width="7.5" height="196" fill="#000" opacity="0.4"/>
<rect x="508.3" y="472" width="7.5" height="196" fill="#000" opacity="0.4"/>
<ellipse cx="506.3" cy="487" rx="7" ry="10" fill="#fff" opacity="0.85"/>
<ellipse cx="506.3" cy="566" rx="7" ry="8" fill="#fff" opacity="0.85"/>
<ellipse cx="506.3" cy="586" rx="7" ry="9" fill="#fff" opacity="0.85"/>
<ellipse cx="506.3" cy="612" rx="7" ry="7" fill="#fff" opacity="0.85"/>
<ellipse cx="506.3" cy="640" rx="7" ry="5" fill="#fff" opacity="0.85"/>
<rect x="520.2" y="366" width="14.0" height="302" fill="#fff" opacity="0.22"/>
</g>
<rect x="456.1" y="366" width="17.0" height="45" fill="#fff" opacity="0.9"/>
<path d="M433.2 369 L441.7 369 L441.9 440 L434.9 486 L433.2 490 Z" fill="#353535" opacity="0.97"/>
<path d="M454.2 369 L445.7 369 L445.5 425 L449.7 470 L452.7 505 L454.2 510 Z" fill="#353535" opacity="0.97"/>
<rect x="434.7" y="366" width="18.0" height="3" fill="#fff" opacity="0.9"/>
<rect x="454.6" y="410.5" width="19.0" height="2.0" fill="#000" opacity="0.75"/>
</g>
<rect x="734.2" y="366" width="1.8" height="302" fill="#e0187c"/>
<rect x="10" y="668" width="1450" height="23" fill="#000"/>
<text x="12.7" y="683.6" style='font-family:"DejaVu Sans","Liberation Sans",sans-serif' font-weight="bold" font-size="11.5px" fill="#fff" textLength="164" lengthAdjust="spacingAndGlyphs">Preset Filter 3 Selected</text>
<text x="1312.7" y="683.6" style='font-family:"DejaVu Sans","Liberation Sans",sans-serif' font-weight="bold" font-size="11.5px" fill="#fff" textLength="146" lengthAdjust="spacingAndGlyphs">30.12.2024 07:26:58</text>
<rect x="12.5" y="702.5" width="50" height="18.5" fill="#0b0b0b"/>
<rect x="14.2" y="704.2" width="46.6" height="15.1" fill="url(#gBtn2)"/>
<text class="b" x="28.3" y="716" textLength="15.7" lengthAdjust="spacingAndGlyphs">SP</text>
<rect x="69.0" y="702.5" width="49.5" height="18.5" fill="#0b0b0b"/>
<rect x="70.7" y="704.2" width="46.1" height="15.1" fill="url(#gBtn2)"/>
<text class="b" x="84" y="716" textLength="18.7" lengthAdjust="spacingAndGlyphs">WF</text>
<rect x="125.0" y="702.5" width="50.5" height="18.5" fill="#0b0b0b"/>
<rect x="126.7" y="704.2" width="47.1" height="15.1" fill="url(#gBtn)"/>
<rect x="126.7" y="704.2" width="47.1" height="15.1" fill="url(#gGloss)"/>
<text class="b o" x="130" y="716" textLength="41.7" lengthAdjust="spacingAndGlyphs">SP+WF</text>
<rect x="181.0" y="701.5" width="50.0" height="19.5" fill="#0b0b0b"/>
<rect x="182.7" y="703.2" width="46.6" height="16.1" fill="url(#gBtn2)"/>
<text class="b" x="185.3" y="715" textLength="41.4" lengthAdjust="spacingAndGlyphs">COMBO</text>
<rect x="613.5" y="702.5" width="25" height="18.5" fill="#0b0b0b"/>
<rect x="615.2" y="704.2" width="21.6" height="15.1" fill="url(#gBtn2)"/>
<rect x="679.0" y="702.5" width="25.5" height="18.5" fill="#0b0b0b"/>
<rect x="680.7" y="704.2" width="22.1" height="15.1" fill="url(#gBtn2)"/>
<rect x="715.0" y="701.5" width="41.5" height="19.5" fill="#0b0b0b"/>
<rect x="716.7" y="703.2" width="38.1" height="16.1" fill="url(#gBtn2)"/>
<text class="b" x="725" y="715" textLength="21.7" lengthAdjust="spacingAndGlyphs">VFO</text>
<rect x="766.5" y="702.5" width="25" height="18.5" fill="#0b0b0b"/>
<rect x="768.2" y="704.2" width="21.6" height="15.1" fill="url(#gBtn2)"/>
<rect x="831.0" y="702.5" width="25.5" height="18.5" fill="#0b0b0b"/>
<rect x="832.7" y="704.2" width="22.1" height="15.1" fill="url(#gBtn2)"/>
<text class="b" x="619.4" y="717.4" textLength="12.8" lengthAdjust="spacingAndGlyphs" style='font-family:"DejaVu Sans","Liberation Sans",sans-serif;font-size:17px'>&lt;</text>
<text class="b" x="684.2" y="717.4" textLength="12.8" lengthAdjust="spacingAndGlyphs" style='font-family:"DejaVu Sans","Liberation Sans",sans-serif;font-size:17px'>&gt;</text>
<text class="b" x="771.6" y="717.4" textLength="12.8" lengthAdjust="spacingAndGlyphs" style='font-family:"DejaVu Sans","Liberation Sans",sans-serif;font-size:17px'>&lt;</text>
<text class="b" x="836.2" y="717.4" textLength="12.8" lengthAdjust="spacingAndGlyphs" style='font-family:"DejaVu Sans","Liberation Sans",sans-serif;font-size:17px'>&gt;</text>
<text class="b" x="641.4" y="716" textLength="33.9" lengthAdjust="spacingAndGlyphs" style="font-size:9.6px">ZOOM</text>
<text class="b" x="797.6" y="716" textLength="25.8" lengthAdjust="spacingAndGlyphs" style="font-size:9.6px">RBW</text>
<rect x="1280.0" y="702.5" width="100.5" height="18.5" fill="#0b0b0b"/>
<rect x="1281.7" y="704.2" width="97.1" height="15.1" fill="url(#gBtn)"/>
<rect x="1281.7" y="704.2" width="97.1" height="15.1" fill="url(#gGloss)"/>
<text class="b o" x="1296" y="716" textLength="67.3" lengthAdjust="spacingAndGlyphs">SQLC THR.</text>
<rect x="1395.0" y="702.5" width="25.5" height="18.5" fill="#0b0b0b"/>
<rect x="1396.7" y="704.2" width="22.1" height="15.1" fill="url(#gBtn)"/>
<rect x="1396.7" y="704.2" width="22.1" height="15.1" fill="url(#gGloss)"/>
<text class="b o" x="1407.75" y="716" text-anchor="middle">i</text>
<rect x="1437.5" y="702.5" width="24.5" height="18.5" fill="#0b0b0b"/>
<rect x="1439.2" y="704.2" width="21.1" height="15.1" fill="url(#gBtn2)"/>
<path d="M1449 707.2 L1456.5 714.7" stroke="#fff" stroke-width="3" fill="none"/><path d="M1459.8 718 L1459.8 708.6 L1450.4 718 Z" fill="#fff"/>
</svg></body></html>
